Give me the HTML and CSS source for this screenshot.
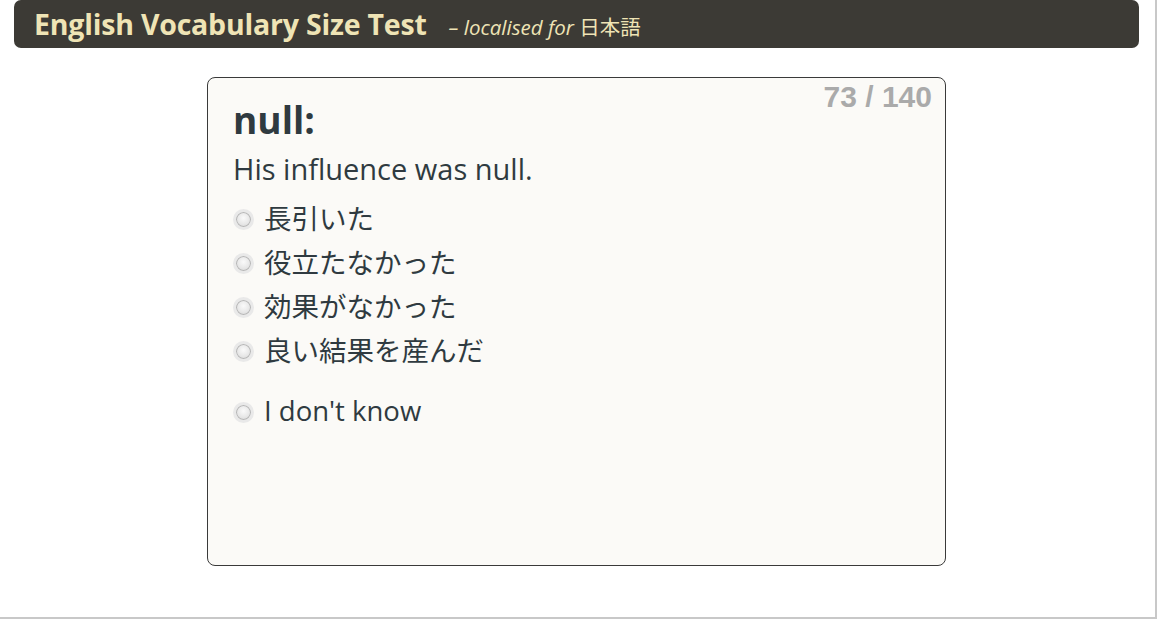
FILE: index.html
```html
<!DOCTYPE html>
<html lang="ja">

<head>
    <meta charset="UTF-8">
    <title>English Vocabulary Size Test</title>
    <link rel="stylesheet" href="styles.css">
</head>

<body>
    <div class="page">
        <header class="topbar">
            <h1>English Vocabulary Size Test</h1>
            <span class="locale"><em>– localised for</em> 日本語</span>
        </header>

        <main class="card">
            <div class="counter">73 / 140</div>
            <h2 class="word">null:</h2>
            <p class="sentence">His influence was null.</p>

            <ul class="options">
                <li><span class="radio"></span>長引いた</li>
                <li><span class="radio"></span>役立たなかった</li>
                <li><span class="radio"></span>効果がなかった</li>
                <li><span class="radio"></span>良い結果を産んだ</li>
                <li class="dunno"><span class="radio"></span>I don't know</li>
            </ul>
        </main>
    </div>
</body>

</html>
```

FILE: styles.css
```css
body {
    margin: 0;
    background-color: #fff;
    font-family: "Open Sans", "Noto Sans CJK JP", sans-serif;
    color: #2f3a40;
}

.page {
    width: 1157px;
    height: 619px;
    padding: 0 16px 0 14px;
    box-sizing: border-box;
    border-right: 2px solid #c8c8c8;
    border-bottom: 2px solid #c8c8c8;
}

.topbar {
    display: flex;
    align-items: baseline;
    height: 48px;
    background-color: #3c3a35;
    border-radius: 7px;
    padding: 0 20px;
    box-sizing: border-box;
}

.topbar h1 {
    margin: 0;
    font-size: 28.5px;
    line-height: 49px;
    font-weight: bold;
    color: #efe4b5;
    letter-spacing: -0.2px;
}

.locale {
    margin-left: 22px;
    font-size: 20.5px;
    color: #efe4b5;
}

.locale em {
    font-style: italic;
}

.card {
    position: relative;
    width: 739px;
    height: 489px;
    margin: 29px 0 0 193px;
    box-sizing: border-box;
    background-color: #fbfaf7;
    border: 1px solid #3a3a3a;
    border-radius: 8px;
    padding: 19px 25px;
}

.counter {
    position: absolute;
    top: 2px;
    right: 13px;
    font-family: "Liberation Sans", Arial, sans-serif;
    font-weight: bold;
    font-size: 30px;
    color: #aaa;
}

.word {
    margin: 0;
    font-size: 37px;
    line-height: 46px;
    font-weight: bold;
}

.sentence {
    margin: 7px 0 0;
    font-size: 29px;
    line-height: 38px;
}

.options {
    list-style: none;
    margin: 7px 0 0;
    padding: 0;
}

.options li {
    display: flex;
    align-items: center;
    height: 44px;
    font-size: 27.5px;
}

.options li.dunno {
    margin-top: 17px;
}

.radio {
    flex: none;
    width: 21px;
    height: 21px;
    margin: 5px 10px 0 0;
    border-radius: 50%;
    border: 3px solid #e9e9e9;
    background: radial-gradient(circle at 50% 40%, #fafafa 0%, #e8e8e8 50%, #cfcfcf 100%);
    box-shadow: inset 0 0 0 1px #b5b5b5;
    box-sizing: border-box;
}
```
